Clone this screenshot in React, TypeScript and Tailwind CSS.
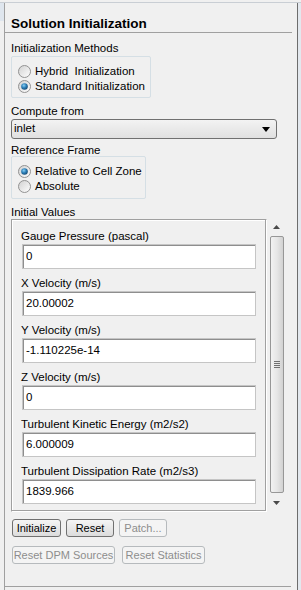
const font = { fontFamily: '"Liberation Sans", Arial, sans-serif' };

function Radio({ checked, label }: { checked?: boolean; label: string }) {
  return (
    <div className="flex items-center h-[15px] gap-[4px]">
      <svg width="13" height="13" viewBox="0 0 13 13">
        <defs>
          <linearGradient id="rb" x1="0" y1="0" x2="1" y2="1">
            <stop offset="0" stopColor="#d0d0d0" />
            <stop offset="1" stopColor="#ffffff" />
          </linearGradient>
          <radialGradient id="rd" cx="0.4" cy="0.35" r="0.7">
            <stop offset="0" stopColor="#8ad0f4" />
            <stop offset="0.5" stopColor="#2c7fb8" />
            <stop offset="1" stopColor="#16476e" />
          </radialGradient>
        </defs>
        <circle cx="6.5" cy="6.5" r="6" fill="url(#rb)" stroke="#929292" strokeWidth="1" />
        {checked && <circle cx="6.5" cy="6.5" r="3.3" fill="url(#rd)" />}
      </svg>
      <span className="whitespace-pre">{label}</span>
    </div>
  );
}

function Field({ label, value }: { label: string; value: string }) {
  return (
    <div className="mb-[7px]">
      <div className="leading-[15px] h-[15px]">{label}</div>
      <div className="w-[234px] h-[25px] ml-[1px] bg-white border border-[#c5c5c5] flex items-center">
        <div className="w-full h-full border-t border-l border-[#8e8e8e] flex items-center pl-[2px]">{value}</div>
      </div>
    </div>
  );
}

function Btn({ label, w, disabled }: { label: string; w: string; disabled?: boolean }) {
  return (
    <div
      className={
        disabled
          ? `${w} h-[18px] whitespace-nowrap text-[11px] rounded-[3px] border border-[#b6babd] bg-[#f4f4f4] text-[#8d8d8d] flex items-center justify-center`
          : `${w} h-[18px] whitespace-nowrap text-[11px] rounded-[3px] border border-[#707070] bg-gradient-to-b from-[#f5f5f5] to-[#dcdcdc] text-black flex items-center justify-center`
      }
    >
      {label}
    </div>
  );
}

export default function App() {
  return (
    <div className="w-[301px] h-[590px] bg-[#f0f0f0] text-[11.5px] text-black overflow-hidden" style={font}>
      <div className="h-[2px]" />
      <div className="h-[1px] bg-[#c9ced4]" />
      <div className="flex h-[587px]">
        <div className="w-[4px] flex flex-col">
          <div className="h-[18px] bg-[#dfe6ee]" />
        </div>
        <div className="w-[293px] border-l border-[#a0a0a0] flex flex-col">
          {/* title */}
          <div className="mr-[5px] pt-[12px] pl-[6px] border-b border-[#a0a0a0] font-bold text-[13.5px] leading-[17px] h-[30px]">
            Solution Initialization
          </div>
          <div className="pl-[6px]">
            <div className="mt-[8px] leading-[14px] h-[15px]">Initialization Methods</div>
            <div className="w-[140px] h-[42px] border border-[#d5dfe5] rounded-[2px] pt-[7px] pl-[6px]">
              <Radio label="Hybrid  Initialization" />
              <Radio checked label="Standard Initialization" />
            </div>

            <div className="mt-[6px] leading-[14px] h-[14px]">Compute from</div>
            <div className="mt-[1px] w-[266px] h-[20px] rounded-[3px] border border-[#707070] bg-gradient-to-b from-[#f3f3f3] to-[#e0e0e0] flex items-center justify-between pl-[2px] pr-[6px]">
              <span>inlet</span>
              <svg width="8" height="5" viewBox="0 0 8 5">
                <path d="M0 0 H8 L4 5 Z" fill="#000" />
              </svg>
            </div>

            <div className="mt-[4px] leading-[14px] h-[13px]">Reference Frame</div>
            <div className="w-[135px] h-[43px] border border-[#d5dfe5] rounded-[2px] pt-[7px] pl-[6px]">
              <Radio checked label="Relative to Cell Zone" />
              <Radio label="Absolute" />
            </div>

            <div className="mt-[6px] leading-[14px] h-[14px]">Initial Values</div>
            <div className="flex">
              <div className="w-[256px] h-[293px] border-t border-l border-[#a0a0a0] border-r border-b border-r-white border-b-white shadow-[inset_-1px_-1px_0_#a0a0a0,inset_1px_1px_0_#ffffff] pt-[9px] pl-[9px]">
                <Field label="Gauge Pressure (pascal)" value="0" />
                <Field label="X Velocity (m/s)" value="20.00002" />
                <Field label="Y Velocity (m/s)" value="-1.110225e-14" />
                <Field label="Z Velocity (m/s)" value="0" />
                <Field label="Turbulent Kinetic Energy (m2/s2)" value="6.000009" />
                <Field label="Turbulent Dissipation Rate (m2/s3)" value="1839.966" />
              </div>
              <div className="ml-[2px] w-[15px] flex flex-col items-center">
                <svg className="mt-[6px]" width="7" height="4" viewBox="0 0 7 4">
                  <path d="M0 4 L3.5 0 L7 4 Z" fill="#4a4a4a" />
                </svg>
                <div className="mt-[7px] w-[14px] h-[257px] rounded-[2px] border border-[#979797] bg-gradient-to-r from-[#f2f2f2] via-[#e6e6e6] to-[#d2d2d2] flex items-center justify-center">
                  <div className="flex flex-col gap-[1px]">
                    <div className="w-[6px] h-[1px] bg-[#707070]" />
                    <div className="w-[6px] h-[1px] bg-[#707070]" />
                    <div className="w-[6px] h-[1px] bg-[#707070]" />
                    <div className="w-[6px] h-[1px] bg-[#707070]" />
                  </div>
                </div>
                <svg className="mt-[8px]" width="7" height="4" viewBox="0 0 7 4">
                  <path d="M0 0 L7 0 L3.5 4 Z" fill="#4a4a4a" />
                </svg>
              </div>
            </div>

            <div className="mt-[7px] flex gap-[5px] pl-[1px]">
              <Btn label="Initialize" w="w-[49px]" />
              <Btn label="Reset" w="w-[48px]" />
              <Btn label="Patch..." w="w-[48px]" disabled />
            </div>
            <div className="mt-[9px] flex gap-[7px] pl-[1px]">
              <Btn label="Reset DPM Sources" w="w-[103px]" disabled />
              <Btn label="Reset Statistics" w="w-[83px]" disabled />
            </div>
          </div>
          <div className="mt-auto mb-[3px] mr-[6px] border-b border-[#a0a0a0]" />
        </div>
        <div className="w-[1px] bg-[#6d6d6d]" />
        <div className="flex-1 bg-[#e3e8ee]" />
      </div>
    </div>
  );
}
